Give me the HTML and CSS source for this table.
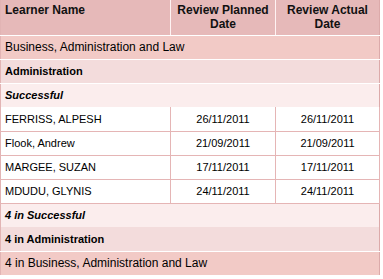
FILE: index.html
```
<!DOCTYPE html>
<html>
<head>
<meta charset="utf-8">
<link rel="stylesheet" href="styles.css">
</head>
<body>
<table class="grid">
  <colgroup>
    <col class="c1"><col class="c2"><col class="c3">
  </colgroup>
  <thead>
    <tr class="head">
      <th class="left">Learner Name</th>
      <th>Review Planned<br>Date</th>
      <th>Review Actual<br>Date</th>
    </tr>
  </thead>
  <tbody>
    <tr class="g1"><td colspan="3">Business, Administration and Law</td></tr>
    <tr class="g2"><td colspan="3">Administration</td></tr>
    <tr class="g3"><td colspan="3">Successful</td></tr>
    <tr class="data"><td>FERRISS, ALPESH</td><td class="d">26/11/2011</td><td class="d">26/11/2011</td></tr>
    <tr class="data"><td>Flook, Andrew</td><td class="d">21/09/2011</td><td class="d">21/09/2011</td></tr>
    <tr class="data"><td>MARGEE, SUZAN</td><td class="d">17/11/2011</td><td class="d">17/11/2011</td></tr>
    <tr class="data"><td>MDUDU, GLYNIS</td><td class="d">24/11/2011</td><td class="d">24/11/2011</td></tr>
    <tr class="g3"><td colspan="3">4 in Successful</td></tr>
    <tr class="g2"><td colspan="3">4 in Administration</td></tr>
    <tr class="g1"><td colspan="3">4 in Business, Administration and Law</td></tr>
  </tbody>
</table>
</body>
</html>
```
FILE: styles.css
```
html, body {
  margin: 0;
  padding: 0;
  background: #ffffff;
}
body {
  font-family: "Liberation Sans", Arial, sans-serif;
  font-size: 11px;
  color: #000;
}
.grid {
  border-collapse: collapse;
  table-layout: fixed;
  width: 379px;
  border-left: 1px solid #e2b4b4;
  border-right: 1px solid #dcaaaa;
  border-bottom: 1px solid #dcaaaa;
}
.c1 { width: 170px; }
.c2 { width: 105px; }
.c3 { width: 104px; }
.head { height: 35px; }
.head th {
  background: #e6b9b9;
  padding: 3px 4px 0;
  vertical-align: top;
  font-weight: bold;
  font-size: 12px;
  line-height: 14px;
  text-align: center;
  color: #111;
  border-left: 1px solid #fff3f3;
  border-bottom: 1px solid #ffffff;
}
.head th.left { text-align: left; border-left: none; }
tbody tr { height: 24px; }
td {
  padding: 0 4px;
  vertical-align: middle;
}
.g1 td {
  background: #f2cac6;
  font-size: 12px;
  border-bottom: 1px solid #ffffff;
}
.g2 td {
  background: #f3dcdc;
  font-weight: bold;
  border-bottom: 1px solid #ffffff;
}
.g3 td {
  background: #fbeded;
  font-weight: bold;
  font-style: italic;
}
.data td {
  background: #ffffff;
  border-right: 1px solid #e5b5b5;
  border-bottom: 1px solid #e5b5b5;
}
.data td.d { text-align: center; }
```
